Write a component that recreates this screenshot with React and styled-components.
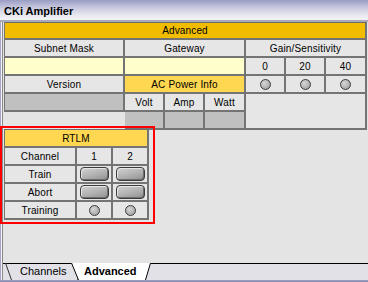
import React from 'react';
import styled, { createGlobalStyle, css } from 'styled-components';

const Global = createGlobalStyle`
  html, body { margin: 0; padding: 0; }
  body {
    background: #e4e4e4;
    font-family: "Liberation Sans", Arial, sans-serif;
  }
  * { box-sizing: border-box; }
`;

const Window = styled.div`
  position: relative;
  width: 368px;
  height: 282px;
  display: flex;
  flex-direction: column;
  background: #e4e4e4;
  overflow: hidden;
`;

const TitleBar = styled.div`
  flex: none;
  height: 22px;
  padding: 0 0 2px 4px;
  display: flex;
  align-items: flex-end;
  background: linear-gradient(#9a9cc4 0%, #c4c5dc 35%, #e8e8f0 75%, #f3f3f7 100%);
  border-bottom: 2px solid #a9a9b8;
  font: bold 11px/13px "Liberation Sans", Arial, sans-serif;
  color: #000;
`;

const Main = styled.div`
  flex: 1;
  display: flex;
  flex-direction: column;
  border-left: 1px solid #a6a6c6;
  box-shadow: inset 1px 0 0 #f2f2f7, inset 2px 0 0 #8a8a8a;
  padding-left: 3px;
  min-height: 0;
`;

const Panel = styled.div`
  flex: 1;
  display: flex;
  flex-direction: column;
  align-items: flex-start;
`;

const Grid = styled.div`
  display: grid;
  grid-template-columns: ${(p) => p.$cols};
  grid-template-rows: ${(p) => p.$rows};
  border-top: 1px solid #6c6c6c;
  margin-top: ${(p) => p.$mt || 0}px;
`;

const Cell = styled.div`
  display: flex;
  align-items: center;
  justify-content: center;
  font-size: 10px;
  letter-spacing: 0.15px;
  color: #000;
  white-space: nowrap;
  background: ${(p) => p.$bg || '#e6e6e6'};
  border-right: 2px solid #747474;
  border-bottom: 2px solid #747474;
  grid-column: span ${(p) => p.$span || 1};
  grid-row: span ${(p) => p.$rowSpan || 1};
  ${(p) =>
    p.$left &&
    css`
      border-left: 1px solid #747474;
    `}
`;

const Blank = styled.div``;

const Radio = styled.span`
  width: 11px;
  height: 11px;
  border-radius: 50%;
  border: 1px solid #3a3a3a;
  background: radial-gradient(circle at 38% 35%, #d6d6d6 0%, #b4b4b4 55%, #9c9c9c 100%);
`;

const Pill = styled.span`
  width: 29px;
  height: 14px;
  border-radius: 4px;
  border: 1px solid #3c3c3c;
  background: linear-gradient(165deg, #d2d2d2 0%, #b0b0b0 55%, #8e8e8e 100%);
  box-shadow: inset 1px 1px 0 #e6e6e6, inset -1px -1px 0 #6e6e6e;
`;

const Highlight = styled.div`
  position: absolute;
  left: 0;
  top: 126px;
  width: 155px;
  height: 98px;
  border: 2px solid #ff0000;
  pointer-events: none;
`;

const TabStrip = styled.div`
  flex: none;
  height: 17px;
  border-top: 1px solid #000;
  background: #e1e1e7;
  display: flex;
  align-items: flex-start;
  padding-left: 1px;
  margin-left: -1px;
`;

const Tab = styled.div`
  position: relative;
  flex: none;
  width: ${(p) => p.$w}px;
  height: 17px;
  margin-top: -1px;
  margin-left: ${(p) => p.$ml || 0}px;
  padding-left: ${(p) => p.$pl || 0}px;
  display: flex;
  align-items: center;
  font: ${(p) => (p.$active ? 'bold' : 'normal')} 11px/13px "Liberation Sans", Arial, sans-serif;
  color: #000;
  z-index: ${(p) => (p.$active ? 2 : 1)};
  & > svg {
    position: absolute;
    left: 0;
    top: 0;
  }
  & > span {
    position: relative;
  }
`;

const BottomEdge = styled.div`
  flex: none;
  height: 2px;
  background: linear-gradient(#a4a8c4, #7f84a8);
`;

function TabShape({ w, botL, botR, active }) {
  return (
    <svg width={w} height={17} viewBox={`0 0 ${w} 17`}>
      {active && (
        <polygon points={`0,0 ${botL},17 ${w - botR},17 ${w},0`} fill="#ffffff" />
      )}
      <line x1={0.5} y1={0} x2={botL + 0.5} y2={17} stroke={active ? '#000' : '#333'} strokeWidth={1} />
      <line x1={w - 0.5} y1={0} x2={w - botR - 0.5} y2={17} stroke={active ? '#000' : '#333'} strokeWidth={1} />
    </svg>
  );
}

export default function App() {
  return (
    <>
      <Global />
      <Window>
        <TitleBar>CKi Amplifier</TitleBar>
        <Main>
          <Panel>
            <Grid
              $cols="121px 40px 40px 41px 40px 40px 41px"
              $rows="17px 18px 18px 18px 18px 18px"
            >
              <Cell $span={7} $left $bg="#f2bd00">Advanced</Cell>

              <Cell $left>Subnet Mask</Cell>
              <Cell $span={3}>Gateway</Cell>
              <Cell $span={3}>Gain/Sensitivity</Cell>

              <Cell $left $bg="#ffffcc" />
              <Cell $span={3} $bg="#ffffcc" />
              <Cell>0</Cell>
              <Cell>20</Cell>
              <Cell>40</Cell>

              <Cell $left>Version</Cell>
              <Cell $span={3} $bg="#ffd750">AC Power Info</Cell>
              <Cell><Radio /></Cell>
              <Cell><Radio /></Cell>
              <Cell><Radio /></Cell>

              <Cell $left $bg="#c0c0c0" />
              <Cell>Volt</Cell>
              <Cell>Amp</Cell>
              <Cell>Watt</Cell>
              <Cell $span={3} $rowSpan={2} />

              <Blank />
              <Cell $bg="#c0c0c0" />
              <Cell $bg="#c0c0c0" />
              <Cell $bg="#c0c0c0" />
            </Grid>

            <Grid $cols="73px 36px 36px" $rows="18px 18px 18px 18px 18px" $mt={-1}>
              <Cell $span={3} $left $bg="#ffd750">RTLM</Cell>

              <Cell $left>Channel</Cell>
              <Cell>1</Cell>
              <Cell>2</Cell>

              <Cell $left>Train</Cell>
              <Cell><Pill /></Cell>
              <Cell><Pill /></Cell>

              <Cell $left>Abort</Cell>
              <Cell><Pill /></Cell>
              <Cell><Pill /></Cell>

              <Cell $left>Training</Cell>
              <Cell><Radio /></Cell>
              <Cell><Radio /></Cell>
            </Grid>
          </Panel>

          <TabStrip>
            <Tab $w={79} $ml={1} $pl={15}>
              <TabShape w={79} botL={6} botR={6} />
              <span>Channels</span>
            </Tab>
            <Tab $w={80} $ml={-13} $pl={13} $active>
              <TabShape w={80} botL={7} botR={5} active />
              <span>Advanced</span>
            </Tab>
          </TabStrip>
        </Main>
        <BottomEdge />
        <Highlight />
      </Window>
    </>
  );
}
